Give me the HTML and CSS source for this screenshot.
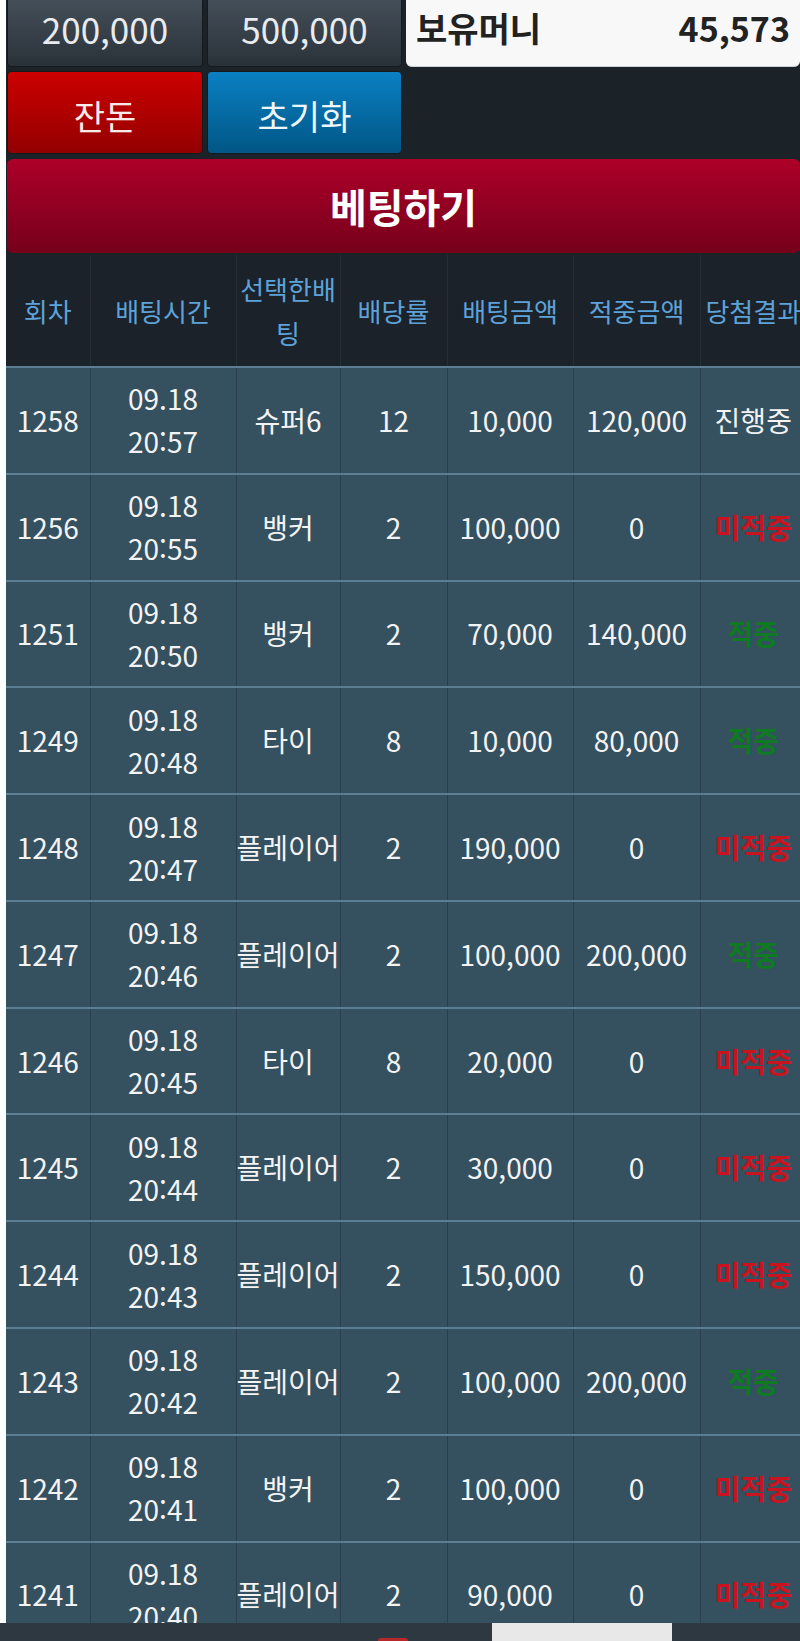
FILE: index.html
```html
<!DOCTYPE html>
<html lang="ko">
<head>
<meta charset="utf-8">
<title>베팅하기</title>
<link rel="stylesheet" href="styles.css">
</head>
<body>
<div class="page">
  <div class="top-grid">
    <button class="btn btn-gray">200,000</button>
    <button class="btn btn-gray">500,000</button>
    <div class="money"><span class="money-label">보유머니</span><span class="money-value">45,573</span></div>
    <button class="btn btn-red">잔돈</button>
    <button class="btn btn-blue">초기화</button>
  </div>
  <div class="bet-bar">베팅하기</div>
  <table class="bets">
    <colgroup>
      <col class="c1"><col class="c2"><col class="c3"><col class="c4"><col class="c5"><col class="c6"><col class="c7">
    </colgroup>
    <thead>
      <tr><th>회차</th><th>배팅시간</th><th>선택한배팅</th><th>배당률</th><th>배팅금액</th><th>적중금액</th><th>당첨결과</th></tr>
    </thead>
    <tbody>
      <tr><td>1258</td><td>09.18<br>20:57</td><td>슈퍼6</td><td>12</td><td>10,000</td><td>120,000</td><td>진행중</td></tr>
      <tr><td>1256</td><td>09.18<br>20:55</td><td>뱅커</td><td>2</td><td>100,000</td><td>0</td><td class="lose">미적중</td></tr>
      <tr><td>1251</td><td>09.18<br>20:50</td><td>뱅커</td><td>2</td><td>70,000</td><td>140,000</td><td class="win">적중</td></tr>
      <tr><td>1249</td><td>09.18<br>20:48</td><td>타이</td><td>8</td><td>10,000</td><td>80,000</td><td class="win">적중</td></tr>
      <tr><td>1248</td><td>09.18<br>20:47</td><td>플레이어</td><td>2</td><td>190,000</td><td>0</td><td class="lose">미적중</td></tr>
      <tr><td>1247</td><td>09.18<br>20:46</td><td>플레이어</td><td>2</td><td>100,000</td><td>200,000</td><td class="win">적중</td></tr>
      <tr><td>1246</td><td>09.18<br>20:45</td><td>타이</td><td>8</td><td>20,000</td><td>0</td><td class="lose">미적중</td></tr>
      <tr><td>1245</td><td>09.18<br>20:44</td><td>플레이어</td><td>2</td><td>30,000</td><td>0</td><td class="lose">미적중</td></tr>
      <tr><td>1244</td><td>09.18<br>20:43</td><td>플레이어</td><td>2</td><td>150,000</td><td>0</td><td class="lose">미적중</td></tr>
      <tr><td>1243</td><td>09.18<br>20:42</td><td>플레이어</td><td>2</td><td>100,000</td><td>200,000</td><td class="win">적중</td></tr>
      <tr><td>1242</td><td>09.18<br>20:41</td><td>뱅커</td><td>2</td><td>100,000</td><td>0</td><td class="lose">미적중</td></tr>
      <tr><td>1241</td><td>09.18<br>20:40</td><td>플레이어</td><td>2</td><td>90,000</td><td>0</td><td class="lose">미적중</td></tr>
    </tbody>
  </table>
</div>
<div class="footer">
  <span class="footer-mark"></span>
  <span class="footer-tab"></span>
</div>
</body>
</html>
```

FILE: styles.css
```css
html, body {
  margin: 0;
  padding: 0;
  overflow-x: hidden;
}
body {
  background: #ffffff;
  font-family: "Noto Sans CJK KR", "Noto Sans", sans-serif;
  color: #f2f2f2;
}
.page {
  margin-left: 6px;
  width: 794px;
  background: #1b2328;
  overflow: hidden;
}
.top-grid {
  display: grid;
  grid-template-columns: 196px 195px 1fr;
  grid-template-rows: 83px 83px;
  column-gap: 4px;
  row-gap: 4px;
  margin-top: -16px;
  padding-left: 1px;
}
.btn {
  margin: 0;
  border: 1px solid #151a1e;
  border-radius: 4px;
  font-family: inherit;
  font-size: 34px;
  color: #f0f0f0;
  display: flex;
  align-items: center;
  justify-content: center;
  padding: 6px 0 0 0;
  line-height: 1;
}
.btn-gray {
  background: linear-gradient(#4a5560, #2a3239);
  font-size: 35px;
  color: #e9ecee;
}
.btn-red {
  background: linear-gradient(#cc0000, #930000);
  color: #fbeaea;
}
.btn-blue {
  background: linear-gradient(#0a80c2, #015686);
  color: #eef6fb;
}
.money {
  background: #f8f8f8;
  border-radius: 0 0 6px 6px;
  border-bottom: 1px solid #c9d3dc;
  display: flex;
  align-items: center;
  justify-content: space-between;
  padding: 6px 10px 0 10px;
  color: #222222;
  font-weight: bold;
  font-size: 34px;
  line-height: 1;
}
.bet-bar {
  margin: 5px 0 0 1px;
  height: 94px;
  border-radius: 6px;
  background: linear-gradient(#ad0029, #76001a);
  display: flex;
  align-items: center;
  justify-content: center;
  font-weight: bold;
  font-size: 40px;
  color: #ffffff;
}
.bets {
  margin-top: 2px;
  width: 800px;
  table-layout: fixed;
  border-collapse: collapse;
}
.c1 { width: 84px; }
.c2 { width: 146px; }
.c3 { width: 104px; }
.c4 { width: 107px; }
.c5 { width: 126px; }
.c6 { width: 127px; }
.c7 { width: 106px; }
.bets th {
  background: #1b222a;
  color: #5ea2da;
  font-weight: normal;
  font-size: 26px;
  line-height: 44px;
  height: 112px;
  padding: 0;
  border-left: 1px solid #242e37;
  border-bottom: 2px solid #5c7e93;
  box-sizing: border-box;
  text-align: center;
  word-break: break-all;
}
.bets th:first-child, .bets td:first-child { border-left: none; }
.bets td {
  background: #35505f;
  color: #f3f3f3;
  font-size: 28px;
  line-height: 43px;
  padding: 9.4px 0;
  border-left: 1px solid #2a3f4d;
  border-bottom: 2px solid #5c7e93;
  text-align: center;
  white-space: nowrap;
}
.bets td.lose { color: #c8141f; font-weight: bold; }
.bets td.win { color: #0e7a22; font-weight: bold; }
.footer {
  position: fixed;
  left: 0;
  right: 0;
  bottom: 0;
  height: 18px;
  background: #2e3840;
}
.footer-tab {
  position: absolute;
  left: 492px;
  top: 0;
  width: 180px;
  height: 18px;
  background: #e8e8e8;
}
.footer-mark {
  position: absolute;
  left: 378px;
  bottom: 0;
  width: 30px;
  height: 3px;
  border-radius: 3px 3px 0 0;
  background: #b8282a;
}
```
